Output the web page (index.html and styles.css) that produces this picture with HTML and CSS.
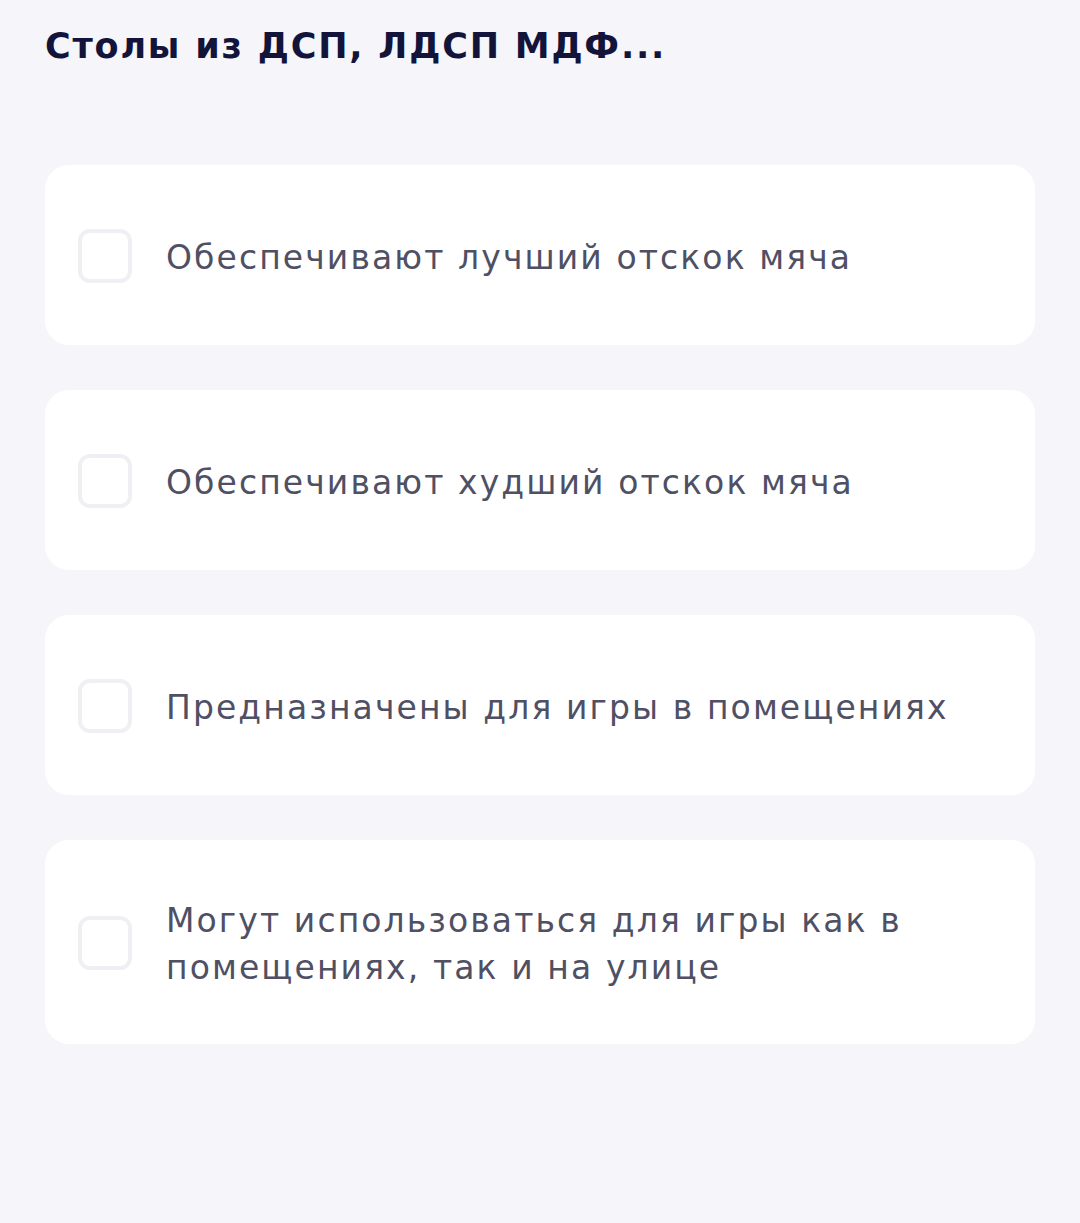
FILE: index.html
```html
<!DOCTYPE html>
<html lang="ru">
<head>
    <meta charset="UTF-8">
    <meta name="viewport" content="width=device-width, initial-scale=1.0">
    <title>Вопрос</title>
    <link rel="stylesheet" href="styles.css">
</head>
<body>
    <div class="question">
        <h1>Столы из ДСП, ЛДСП МДФ...</h1>

        <div class="options">
            <label class="option">
                <span class="checkbox"></span>
                <span class="option-text">Обеспечивают лучший отскок мяча</span>
            </label>
            <label class="option">
                <span class="checkbox"></span>
                <span class="option-text">Обеспечивают худший отскок мяча</span>
            </label>
            <label class="option">
                <span class="checkbox"></span>
                <span class="option-text">Предназначены для игры в помещениях</span>
            </label>
            <label class="option">
                <span class="checkbox"></span>
                <span class="option-text">Могут использоваться для игры как в помещениях, так и на улице</span>
            </label>
        </div>
    </div>
</body>
</html>
```

FILE: styles.css
```css
* {
    box-sizing: border-box;
    margin: 0;
    padding: 0;
}

body {
    font-family: 'DejaVu Sans', sans-serif;
    background-color: #f5f5fa;
    min-height: 100vh;
}

.question {
    padding: 20px 45px 40px 45px;
}

h1 {
    font-size: 35px;
    font-weight: 700;
    letter-spacing: 1.8px;
    color: #13143a;
    line-height: 52px;
    margin-bottom: 93px;
}

.options {
    display: flex;
    flex-direction: column;
    gap: 45px;
}

.option {
    display: flex;
    align-items: center;
    min-height: 180px;
    padding: 54px 60px 53px 33px;
    background-color: #fff;
    border-radius: 24px;
    cursor: pointer;
}

.checkbox {
    flex: 0 0 54px;
    width: 54px;
    height: 54px;
    border: 4px solid #efeff4;
    border-radius: 12px;
    margin-right: 34px;
}

.option-text {
    font-size: 33px;
    letter-spacing: 2.1px;
    line-height: 47px;
    color: #4f5064;
    padding-top: 3px;
}
```
